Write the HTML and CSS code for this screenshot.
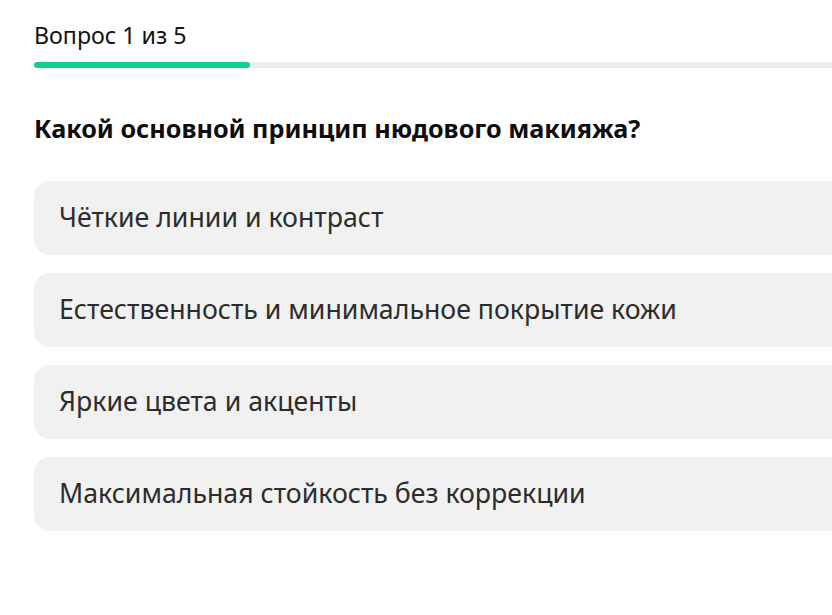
FILE: index.html
```html
<!DOCTYPE html>
<html lang="ru">
<head>
    <meta charset="UTF-8">
    <meta name="viewport" content="width=device-width, initial-scale=1.0">
    <title>Тест: нюдовый макияж</title>
    <link rel="stylesheet" href="styles.css">
</head>
<body>

    <div id="quiz">
        <!-- Progress -->
        <div class="progress">
            <span class="progress-label">Вопрос 1 из 5</span>
            <div class="progress-track">
                <div class="progress-fill" style="width: 20%"></div>
            </div>
        </div>

        <!-- Question -->
        <h2 class="question">Какой основной принцип нюдового макияжа?</h2>

        <!-- Answers -->
        <div class="answers">
            <button class="answer">Чёткие линии и контраст</button>
            <button class="answer">Естественность и минимальное покрытие кожи</button>
            <button class="answer">Яркие цвета и акценты</button>
            <button class="answer">Максимальная стойкость без коррекции</button>
        </div>
    </div>

</body>
</html>
```

FILE: styles.css
```css
/* Page */
body{
    margin: 0;
    background-color: #fff;
    font-family: "Noto Sans", "DejaVu Sans", sans-serif;
    color: #111;
    overflow: hidden;
}
#quiz{
    width: 1080px;
    padding: 20px 34px;
}

/* Progress Styles */
.progress{
    display: flex;
    flex-direction: column;
}
.progress-label{
    font-size: 23.2px;
    line-height: 30px;
    color: #111;
}
.progress-track{
    margin-top: 12px;
    height: 6px;
    border-radius: 3px;
    background-color: #ececec;
}
.progress-fill{
    height: 100%;
    border-radius: 3px;
    background-color: #13cf8d;
}

/* Question Styles */
.question{
    margin: 43px 0 36px;
    font-size: 25.2px;
    line-height: 34px;
    font-weight: 700;
    color: #0d0d0d;
}

/* Answer Styles */
.answers{
    display: flex;
    flex-direction: column;
    gap: 18px;
}
.answer{
    height: 74px;
    padding: 0 25px 3px;
    border: none;
    border-radius: 16px;
    background-color: #f1f1f1;
    font-family: inherit;
    font-size: 26.7px;
    color: #2c2c2c;
    text-align: left;
    cursor: pointer;
}
```
